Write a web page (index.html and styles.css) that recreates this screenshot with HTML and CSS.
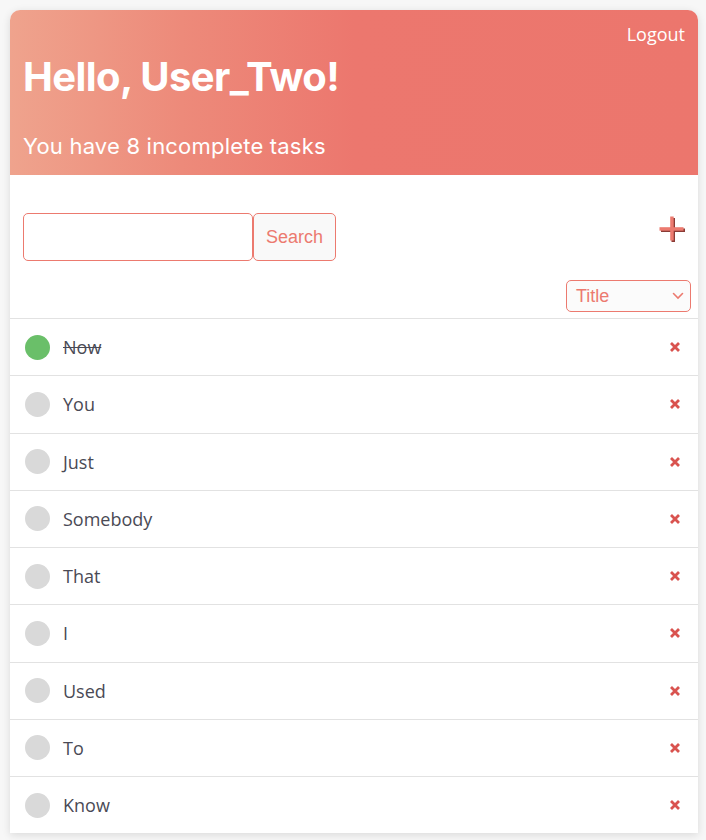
FILE: index.html
```html
<!DOCTYPE html>
<html>
<head>
<meta charset="utf-8">
<link rel="stylesheet" href="styles.css">
</head>
<body>
<div class="card">
  <header class="hero">
    <div class="logout-row"><a class="logout">Logout</a></div>
    <h1 class="hello">Hello, User_Two!</h1>
    <p class="sub">You have 8 incomplete tasks</p>
  </header>
  <div class="toolbar">
    <div class="search">
      <input class="search-input" type="text">
      <button class="search-btn">Search</button>
    </div>
    <svg class="plus" width="27" height="27" viewBox="0 0 27 27">
      <rect x="12.5" y="2" width="3.5" height="24" fill="#8a3b35"/>
      <rect x="2" y="12.5" width="24" height="3.5" fill="#8a3b35"/>
      <rect x="11.2" y="0.5" width="3.5" height="24" fill="#ec7a6f"/>
      <rect x="0.5" y="11.2" width="24" height="3.5" fill="#ec7a6f"/>
    </svg>
  </div>
  <div class="sort-row">
    <div class="select"><span>Title</span>
      <svg width="12" height="8" viewBox="0 0 12 8"><path d="M1.5 1.5 L6 6 L10.5 1.5" fill="none" stroke="#ec7a6f" stroke-width="1.6" stroke-linecap="round"/></svg>
    </div>
  </div>
  <ul class="tasks">
    <li class="task"><span class="dot done"></span><span class="label strike">Now</span><svg class="del" width="12" height="12" viewBox="0 0 12 12"><path d="M2 2 L10 10 M10 2 L2 10" stroke="#d9534f" stroke-width="2.8"/></svg></li>
    <li class="task"><span class="dot"></span><span class="label">You</span><svg class="del" width="12" height="12" viewBox="0 0 12 12"><path d="M2 2 L10 10 M10 2 L2 10" stroke="#d9534f" stroke-width="2.8"/></svg></li>
    <li class="task"><span class="dot"></span><span class="label">Just</span><svg class="del" width="12" height="12" viewBox="0 0 12 12"><path d="M2 2 L10 10 M10 2 L2 10" stroke="#d9534f" stroke-width="2.8"/></svg></li>
    <li class="task"><span class="dot"></span><span class="label">Somebody</span><svg class="del" width="12" height="12" viewBox="0 0 12 12"><path d="M2 2 L10 10 M10 2 L2 10" stroke="#d9534f" stroke-width="2.8"/></svg></li>
    <li class="task"><span class="dot"></span><span class="label">That</span><svg class="del" width="12" height="12" viewBox="0 0 12 12"><path d="M2 2 L10 10 M10 2 L2 10" stroke="#d9534f" stroke-width="2.8"/></svg></li>
    <li class="task"><span class="dot"></span><span class="label">I</span><svg class="del" width="12" height="12" viewBox="0 0 12 12"><path d="M2 2 L10 10 M10 2 L2 10" stroke="#d9534f" stroke-width="2.8"/></svg></li>
    <li class="task"><span class="dot"></span><span class="label">Used</span><svg class="del" width="12" height="12" viewBox="0 0 12 12"><path d="M2 2 L10 10 M10 2 L2 10" stroke="#d9534f" stroke-width="2.8"/></svg></li>
    <li class="task"><span class="dot"></span><span class="label">To</span><svg class="del" width="12" height="12" viewBox="0 0 12 12"><path d="M2 2 L10 10 M10 2 L2 10" stroke="#d9534f" stroke-width="2.8"/></svg></li>
    <li class="task"><span class="dot"></span><span class="label">Know</span><svg class="del" width="12" height="12" viewBox="0 0 12 12"><path d="M2 2 L10 10 M10 2 L2 10" stroke="#d9534f" stroke-width="2.8"/></svg></li>
  </ul>
</div>
</body>
</html>
```
FILE: styles.css
```css
html, body { margin: 0; padding: 0; }
body {
  background: #f7f7f7;
  padding: 10px 8px 10px 10px;
  font-family: "Open Sans", "Noto Sans", sans-serif;
}
.card {
  background: #fff;
  border-radius: 10px 10px 0 0;
  box-shadow: 0 2px 8px rgba(0,0,0,0.12);
  overflow: hidden;
}
.hero {
  height: 165px;
  box-sizing: border-box;
  background: linear-gradient(to right, #efa38d 0%, #ed8a7a 25%, #ec776e 50%, #ec766d 100%);
  color: #fff;
  padding: 12px 13px 0 13px;
  display: flex;
  flex-direction: column;
}
.logout-row { display: flex; justify-content: flex-end; }
.logout {
  font-family: "Open Sans", sans-serif;
  font-size: 18px;
  line-height: 24px;
  color: #fff;
}
.hello {
  margin: 7px 0 0 0;
  font-family: "Inter", sans-serif;
  font-weight: 700;
  font-size: 40px;
  line-height: 48px;
  letter-spacing: -0.6px;
}
.sub {
  margin: 31px 0 0 0;
  font-family: "Inter", sans-serif;
  font-size: 22px;
  line-height: 28px;
  letter-spacing: 0.2px;
}
.toolbar {
  display: flex;
  justify-content: space-between;
  align-items: flex-start;
  padding: 38px 13px 0 13px;
}
.search { display: flex; }
.search-input {
  width: 230px;
  height: 48px;
  box-sizing: border-box;
  border: 1px solid #ec7a6f;
  border-radius: 5px;
  margin: 0;
  outline: none;
}
.search-btn {
  height: 48px;
  width: 83px;
  box-sizing: border-box;
  border: 1px solid #ec7a6f;
  border-radius: 5px;
  background: #f9f9f9;
  color: #ec7a6f;
  font-family: "Liberation Sans", Arial, sans-serif;
  font-size: 18px;
  margin: 0;
  padding: 0;
}
.plus {
  margin-top: 3px;
  margin-right: -1px;
}
.sort-row {
  display: flex;
  justify-content: flex-end;
  padding: 19px 7px 6px 0;
}
.select {
  width: 125px;
  height: 32px;
  box-sizing: border-box;
  border: 1px solid #ec7a6f;
  border-radius: 5px;
  background: #fbfbfb;
  display: flex;
  align-items: center;
  justify-content: space-between;
  padding: 0 6px 0 9px;
  color: #ec7a6f;
  font-family: "Liberation Sans", Arial, sans-serif;
  font-size: 18px;
}
.tasks { list-style: none; margin: 0; padding: 0; }
.task {
  height: 56.25px;
  border-top: 1px solid #e2e2e2;
  display: flex;
  align-items: center;
  padding: 0 17px 0 15px;
}
.dot {
  width: 25px;
  height: 25px;
  border-radius: 50%;
  background: #d9d9d9;
  flex: none;
}
.dot.done { background: #6abf69; }
.label {
  flex: 1;
  margin-left: 13px;
  font-family: "Open Sans", sans-serif;
  font-size: 18px;
  color: #4a4a55;
}
.strike { text-decoration: line-through; }
.del { flex: none; }
```
